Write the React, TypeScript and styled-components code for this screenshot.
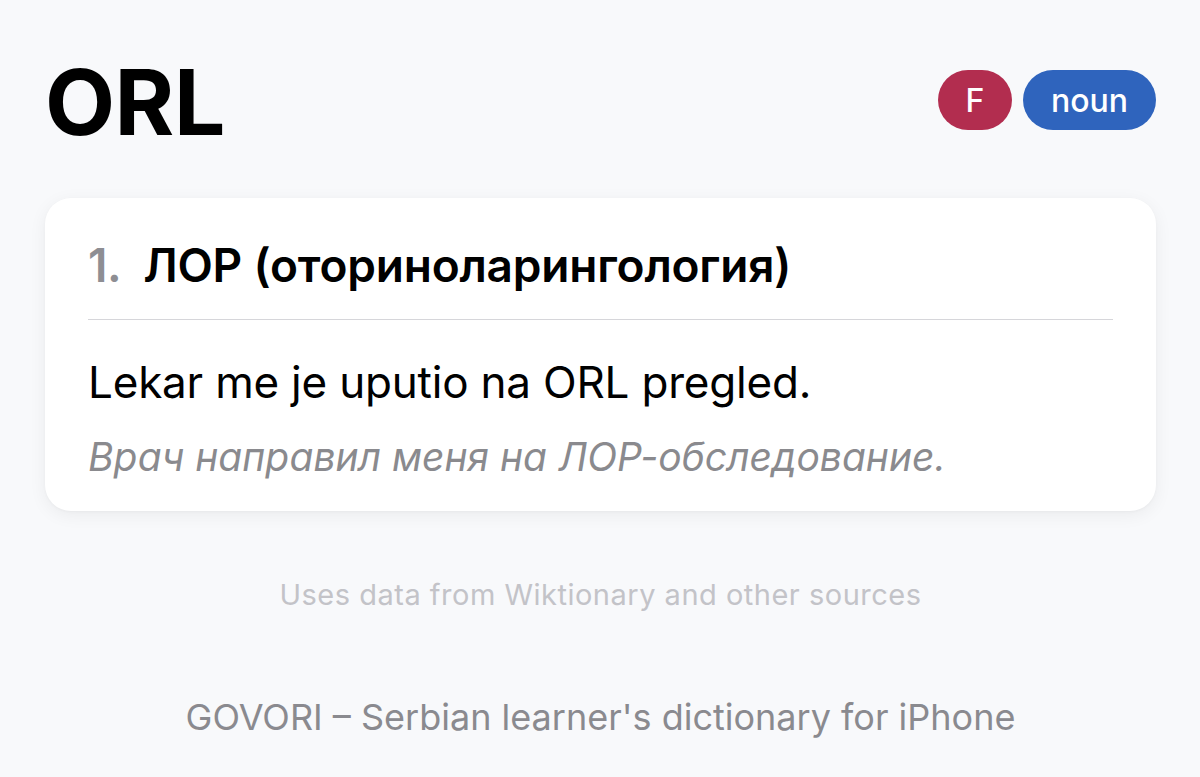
import React from "react";
import styled, { createGlobalStyle } from "styled-components";

const Global = createGlobalStyle`
  html, body { margin: 0; padding: 0; background: #f8f9fb; }
  body { font-family: Inter, "Noto Sans", "Liberation Sans", sans-serif; -webkit-font-smoothing: antialiased; }
`;

const Page = styled.div`
  width: 1200px;
  height: 777px;
  box-sizing: border-box;
  padding: 50px 44px 0 45px;
  display: flex;
  flex-direction: column;
`;

const Header = styled.header`
  display: flex;
  align-items: center;
  justify-content: space-between;
  height: 100px;
`;

const Title = styled.h1`
  margin: 0 0 -4px 0;
  font-size: 91px;
  font-weight: 700;
  letter-spacing: -0.5px;
  color: #000;
  line-height: 1;
`;

const Badges = styled.div`
  display: flex;
  gap: 11px;
  align-items: center;
`;

const Badge = styled.span<{ $bg: string; $w: number }>`
  display: inline-flex;
  align-items: center;
  justify-content: center;
  height: 60px;
  width: ${(p) => p.$w}px;
  border-radius: 30px;
  background: ${(p) => p.$bg};
  color: #fff;
  font-size: 32px;
  font-weight: 500;
`;

const Card = styled.section`
  margin-top: 48px;
  background: #fff;
  border-radius: 26px;
  box-shadow: 0 4px 18px rgba(0, 0, 0, 0.06), 0 1px 3px rgba(0, 0, 0, 0.03);
  padding: 40px 43px 30px 43px;
`;

const SenseRow = styled.div`
  display: flex;
  align-items: baseline;
  gap: 22px;
  padding-bottom: 26px;
  border-bottom: 1px solid #d6d6da;
  line-height: 1.2;
`;

const Num = styled.span`
  font-size: 46px;
  font-weight: 600;
  color: #8e8e93;
  letter-spacing: -0.5px;
`;

const Gloss = styled.span`
  font-size: 46px;
  font-weight: 600;
  color: #000;
  letter-spacing: -0.2px;
`;

const Example = styled.p`
  margin: 36px 0 0 0;
  font-size: 44px;
  font-weight: 400;
  color: #000;
  letter-spacing: -0.2px;
  line-height: 1.2;
`;

const Translation = styled.p`
  margin: 25px 0 0 0;
  font-size: 39px;
  font-style: italic;
  color: #8a8a8e;
  letter-spacing: 0;
  line-height: 1.2;
`;

const Credit = styled.p`
  margin: 67px 0 0 0;
  text-align: center;
  font-size: 29px;
  line-height: 1.2;
  color: #c3c3c8;
  letter-spacing: 0.5px;
`;

const Footer = styled.p`
  margin: 83px 0 0 0;
  text-align: center;
  font-size: 36px;
  line-height: 1.2;
  color: #8a8a8f;
  letter-spacing: 0;
`;

export default function App() {
  return (
    <>
      <Global />
      <Page>
        <Header>
          <Title>ORL</Title>
          <Badges>
            <Badge $bg="#b22d4f" $w={74}>F</Badge>
            <Badge $bg="#2f64bd" $w={133}>noun</Badge>
          </Badges>
        </Header>
        <Card>
          <SenseRow>
            <Num>1.</Num>
            <Gloss>ЛОР (оториноларингология)</Gloss>
          </SenseRow>
          <Example>Lekar me je uputio na ORL pregled.</Example>
          <Translation>Врач направил меня на ЛОР-обследование.</Translation>
        </Card>
        <Credit>Uses data from Wiktionary and other sources</Credit>
        <Footer>GOVORI – Serbian learner's dictionary for iPhone</Footer>
      </Page>
    </>
  );
}
